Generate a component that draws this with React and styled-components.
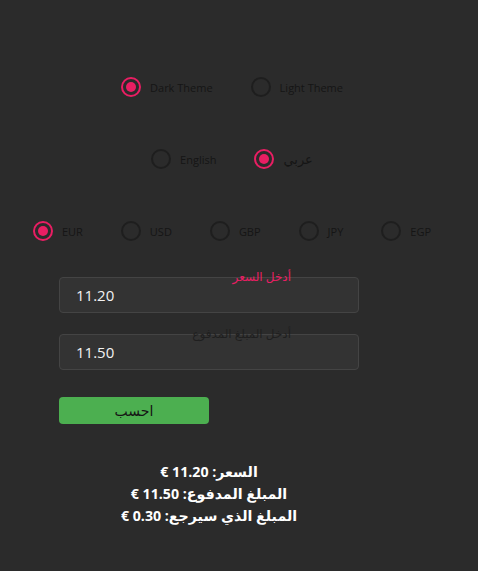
import React, { useState } from "react";
import styled, { createGlobalStyle } from "styled-components";

const GlobalStyle = createGlobalStyle`
  html, body {
    margin: 0;
    padding: 0;
    background: #2b2b2b;
  }
  body {
    font-family: "Open Sans", "DejaVu Sans", sans-serif;
  }
`;

// Styled-components
const Page = styled.div`
  min-height: 571px;
  padding-top: 77px;
  box-sizing: border-box;
  background: #2b2b2b;
`;
const RadioRow = styled.div`
  display: flex;
  justify-content: center;
  gap: 28px;
  padding-right: 4px;
  margin-bottom: 52px;
`;
const Option = styled.label`
  display: flex;
  align-items: center;
  gap: 9px;
  height: 20px;
  margin-right: 10px;
  font-size: ${(p) => (p.rtl ? "13px" : "11px")};
  color: #151515;
  cursor: pointer;
`;
const RadioInput = styled.input`
  appearance: none;
  margin: 0;
  width: 20px;
  height: 20px;
  border-radius: 50%;
  border: 2px solid ${(p) => (p.checked ? "#e91e63" : "#1e1e1e")};
  box-sizing: border-box;
  display: grid;
  place-items: center;
  cursor: pointer;
  &::after {
    content: "";
    width: 10px;
    height: 10px;
    border-radius: 50%;
    background: ${(p) => (p.checked ? "#e91e63" : "transparent")};
  }
`;
const Form = styled.div`
  width: 300px;
  margin-left: 59px;
  margin-top: -16px;
`;
const Field = styled.div`
  position: relative;
  margin-bottom: 21px;
`;
const FloatLabel = styled.span`
  position: absolute;
  right: 68px;
  top: -9px;
  font-size: 12px;
  color: ${(p) => (p.active ? "#e91e63" : "#1f1f1f")};
  direction: rtl;
  pointer-events: none;
`;
const Input = styled.input`
  display: block;
  width: 100%;
  height: 36px;
  box-sizing: border-box;
  padding: 0 16px;
  border: 1px solid #444444;
  border-radius: 4px;
  background: #333333;
  color: #f2f2f2;
  font-family: "Open Sans", "DejaVu Sans", sans-serif;
  font-size: 15px;
  outline: none;
`;
const Button = styled.button`
  display: block;
  width: 150px;
  height: 27px;
  margin-top: 27px;
  border: none;
  border-radius: 4px;
  background: #4caf50;
  color: #151515;
  font-family: "Open Sans", "DejaVu Sans", sans-serif;
  font-size: 14px;
  cursor: pointer;
`;
const Results = styled.div`
  margin-top: 37px;
  text-align: center;
  color: #ffffff;
  font-weight: bold;
  font-size: 14.2px;
  line-height: 22px;
`;
const ResultLine = styled.div`
  direction: rtl;
`;

const themes = ["Dark Theme", "Light Theme"];
const langs = ["English", "عربي"];
const currencies = ["EUR", "USD", "GBP", "JPY", "EGP"];

const App = () => {
  const [theme, setTheme] = useState("Dark Theme");
  const [lang, setLang] = useState("عربي");
  const [currency, setCurrency] = useState("EUR");
  const [price, setPrice] = useState("11.20");
  const [paid, setPaid] = useState("11.50");

  const change = (parseFloat(paid) - parseFloat(price)).toFixed(2);

  return (
    <>
      <GlobalStyle />
      <Page>
        <RadioRow>
          {themes.map((t) => (
            <Option key={t}>
              <RadioInput
                type="radio"
                name="theme"
                checked={theme === t}
                onChange={() => setTheme(t)}
              />
              {t}
            </Option>
          ))}
        </RadioRow>
        <RadioRow>
          {langs.map((l) => (
            <Option key={l} rtl={l === "عربي"}>
              <RadioInput
                type="radio"
                name="lang"
                checked={lang === l}
                onChange={() => setLang(l)}
              />
              {l}
            </Option>
          ))}
        </RadioRow>
        <RadioRow>
          {currencies.map((c) => (
            <Option key={c}>
              <RadioInput
                type="radio"
                name="currency"
                checked={currency === c}
                onChange={() => setCurrency(c)}
              />
              {c}
            </Option>
          ))}
        </RadioRow>
        <Form>
          <Field>
            <Input value={price} onChange={(e) => setPrice(e.target.value)} />
            <FloatLabel active>أدخل السعر</FloatLabel>
          </Field>
          <Field>
            <Input value={paid} onChange={(e) => setPaid(e.target.value)} />
            <FloatLabel>أدخل المبلغ المدفوع</FloatLabel>
          </Field>
          <Button>احسب</Button>
          <Results>
            <ResultLine>السعر: {price} €</ResultLine>
            <ResultLine>المبلغ المدفوع: {paid} €</ResultLine>
            <ResultLine>المبلغ الذي سيرجع: {change} €</ResultLine>
          </Results>
        </Form>
      </Page>
    </>
  );
};

export default App;
